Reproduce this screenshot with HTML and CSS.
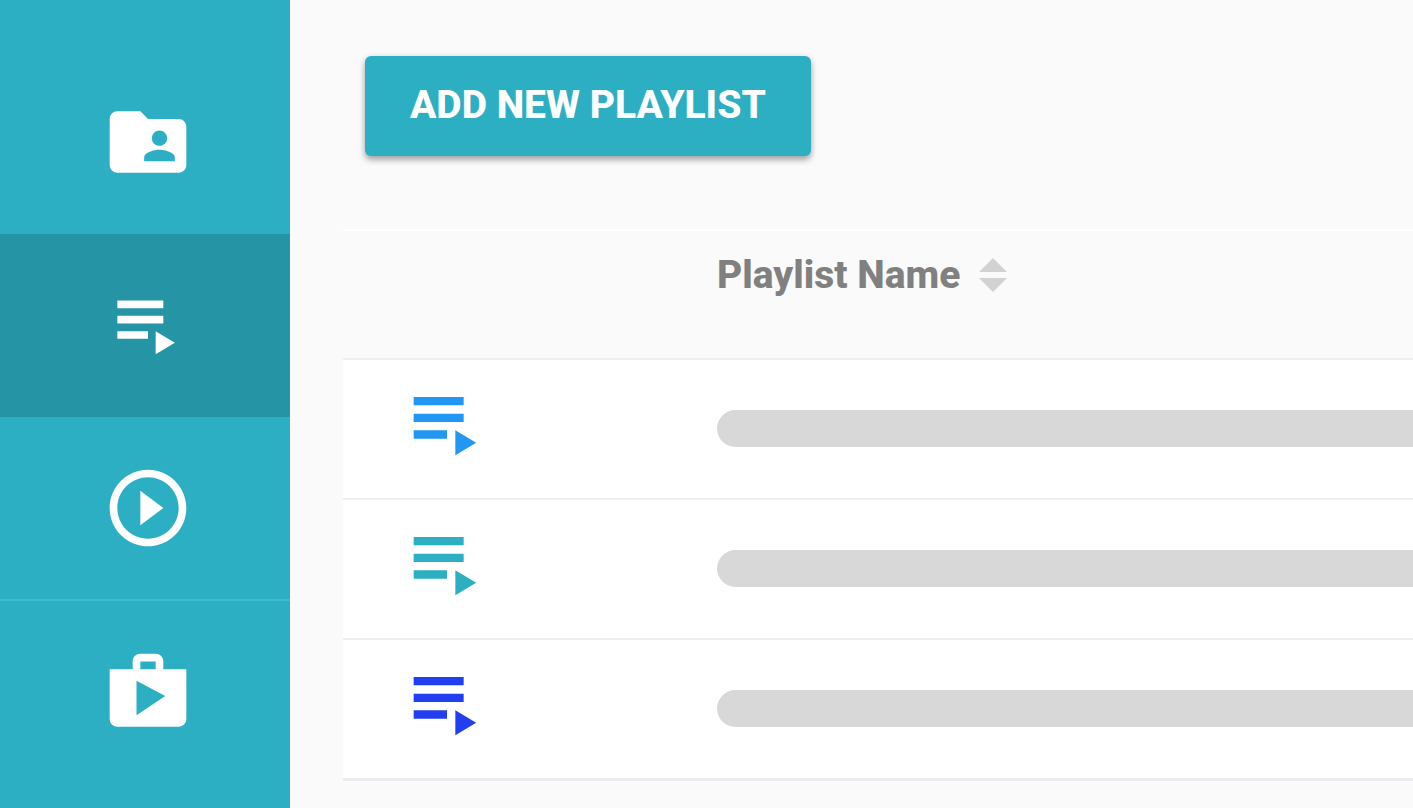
FILE: index.html
```html
<!DOCTYPE html>
<html lang="en">
<head>
<meta charset="utf-8">
<meta name="viewport" content="width=device-width, initial-scale=1">
<title>Playlists</title>
<link rel="stylesheet" href="styles.css">
</head>
<body>
<div class="app">
  <nav class="sidebar" aria-label="Main">
    <a class="nav-item" href="#shared" aria-label="Shared folder">
      <svg class="nav-icon" viewBox="0 0 24 24"><path d="M20 6h-8l-2-2H4c-1.1 0-1.99.9-1.99 2L2 18c0 1.1.9 2 2 2h16c1.1 0 2-.9 2-2V8c0-1.1-.9-2-2-2zm-5 3c1.1 0 2 .9 2 2s-.9 2-2 2-2-.9-2-2 .9-2 2-2zm4 8h-8v-1c0-1.33 2.67-2 4-2s4 .67 4 2v1z"/></svg>
    </a>
    <a class="nav-item nav-item-active" href="#playlists" aria-label="Playlists" aria-current="page">
      <svg class="nav-icon" viewBox="0 0.4 24 24"><path d="M4 10h12v2H4zM4 6h12v2H4zM4 14h8v2H4zM14 14v6l5-3z"/></svg>
    </a>
    <a class="nav-item" href="#play" aria-label="Play">
      <svg class="nav-icon" viewBox="0 0 24 24"><path d="M10 16.5l6-4.5-6-4.5v9zM12 2C6.48 2 2 6.48 2 12s4.480 10 10 10 10-4.480 10-10S17.520 2 12 2zm0 18c-4.410 0-8-3.590-8-8s3.590-8 8-8 8 3.590 8 8-3.590 8-8 8z"/></svg>
    </a>
    <a class="nav-item nav-item-divided" href="#store" aria-label="Store">
      <svg class="nav-icon" viewBox="0 -0.3 24 24"><path d="M16 6V4c0-1.11-.89-2-2-2h-4c-1.11 0-2 .89-2 2v2H2v13c0 1.11.89 2 2 2h16c1.11 0 2-.89 2-2V6h-6zm-6-2h4v2h-4V4zM9 18V9l7.500 4L9 18z"/></svg>
    </a>
  </nav>
  <main class="content">
    <button class="add-button" type="button">ADD NEW PLAYLIST</button>
    <table class="playlists">
      <thead>
        <tr>
          <td class="icon-col"></td>
          <th class="name-col" scope="col">
            <button class="sort-button" type="button">Playlist Name
              <svg class="sort-icon" viewBox="0 0 28 34"><path d="M14 0L28 14H0zM14 34L28 20H0z"/></svg>
            </button>
          </th>
        </tr>
      </thead>
      <tbody>
        <tr>
          <td class="icon-col"><svg class="row-icon row-icon-sky" viewBox="0 0 24 24"><path d="M4 10h12v2H4zM4 6h12v2H4zM4 14h8v2H4zM14 14v6l5-3z"/></svg></td>
          <td class="name-col"><div class="name-bar"></div></td>
        </tr>
        <tr>
          <td class="icon-col"><svg class="row-icon row-icon-teal" viewBox="0 0 24 24"><path d="M4 10h12v2H4zM4 6h12v2H4zM4 14h8v2H4zM14 14v6l5-3z"/></svg></td>
          <td class="name-col"><div class="name-bar"></div></td>
        </tr>
        <tr>
          <td class="icon-col"><svg class="row-icon row-icon-blue" viewBox="0 0 24 24"><path d="M4 10h12v2H4zM4 6h12v2H4zM4 14h8v2H4zM14 14v6l5-3z"/></svg></td>
          <td class="name-col"><div class="name-bar"></div></td>
        </tr>
      </tbody>
    </table>
  </main>
</div>
</body>
</html>
```
FILE: styles.css
```css
* {
  box-sizing: border-box;
}

body {
  margin: 0;
  background: #fafafa;
  font-family: Roboto, "Liberation Sans", sans-serif;
}

.app {
  display: flex;
  min-height: 100vh;
}

.sidebar {
  flex: 0 0 290px;
  padding-top: 51px;
  background: #2cafc3;
}

.nav-item {
  display: flex;
  align-items: center;
  justify-content: center;
  height: 183px;
  padding: 0 0 2px 6px;
}

.nav-item-active {
  background: #2594a4;
}

.nav-item-divided {
  border-top: 2px solid #3cbdd0;
  margin-top: -1px;
}

.nav-icon {
  width: 92px;
  height: 92px;
  fill: #fff;
}

.content {
  flex: 1;
  min-width: 0;
  padding: 56px 0 28px 53px;
}

.add-button {
  display: block;
  height: 100px;
  margin: 0 0 73px 22px;
  padding: 0 45px 3px;
  border: 0;
  border-radius: 6px;
  background: #2cafc3;
  box-shadow: 0 4px 6px rgba(0, 0, 0, 0.32), 0 0 6px rgba(0, 0, 0, 0.08);
  color: #fff;
  font: 800 39px/48px Roboto, "Liberation Sans", sans-serif;
}

.playlists {
  width: 100%;
  table-layout: fixed;
  border-spacing: 0;
  border-top: 2px solid #fff;
  border-bottom: 3px solid #ebecf2;
}

.playlists td,
.playlists th {
  padding: 0;
  text-align: left;
}

.playlists .icon-col {
  width: 208px;
}

.playlists .name-col {
  padding-left: 166px;
}

.playlists thead th {
  height: 127px;
  padding-top: 20px;
  vertical-align: top;
}

.sort-button {
  display: flex;
  align-items: center;
  gap: 19px;
  padding: 0;
  border: 0;
  background: none;
  color: #808080;
  font: 800 39px/48px Roboto, "Liberation Sans", sans-serif;
}

.sort-icon {
  width: 28px;
  height: 34px;
  fill: #d2d2d2;
}

.playlists tbody td {
  height: 140px;
  border-top: 2px solid #eeeff3;
  background: #fff;
}

.playlists tbody .icon-col {
  padding: 0 0 14px 54px;
}

.playlists tbody .name-col {
  padding-bottom: 2px;
}

.row-icon {
  display: block;
  width: 100px;
  height: 100px;
}

.row-icon-sky {
  fill: #2196f3;
}

.row-icon-teal {
  fill: #2cafc0;
}

.row-icon-blue {
  fill: #213ff0;
}

.name-bar {
  height: 37px;
  border-radius: 19px 0 0 19px;
  background: #d8d8d8;
}
```
